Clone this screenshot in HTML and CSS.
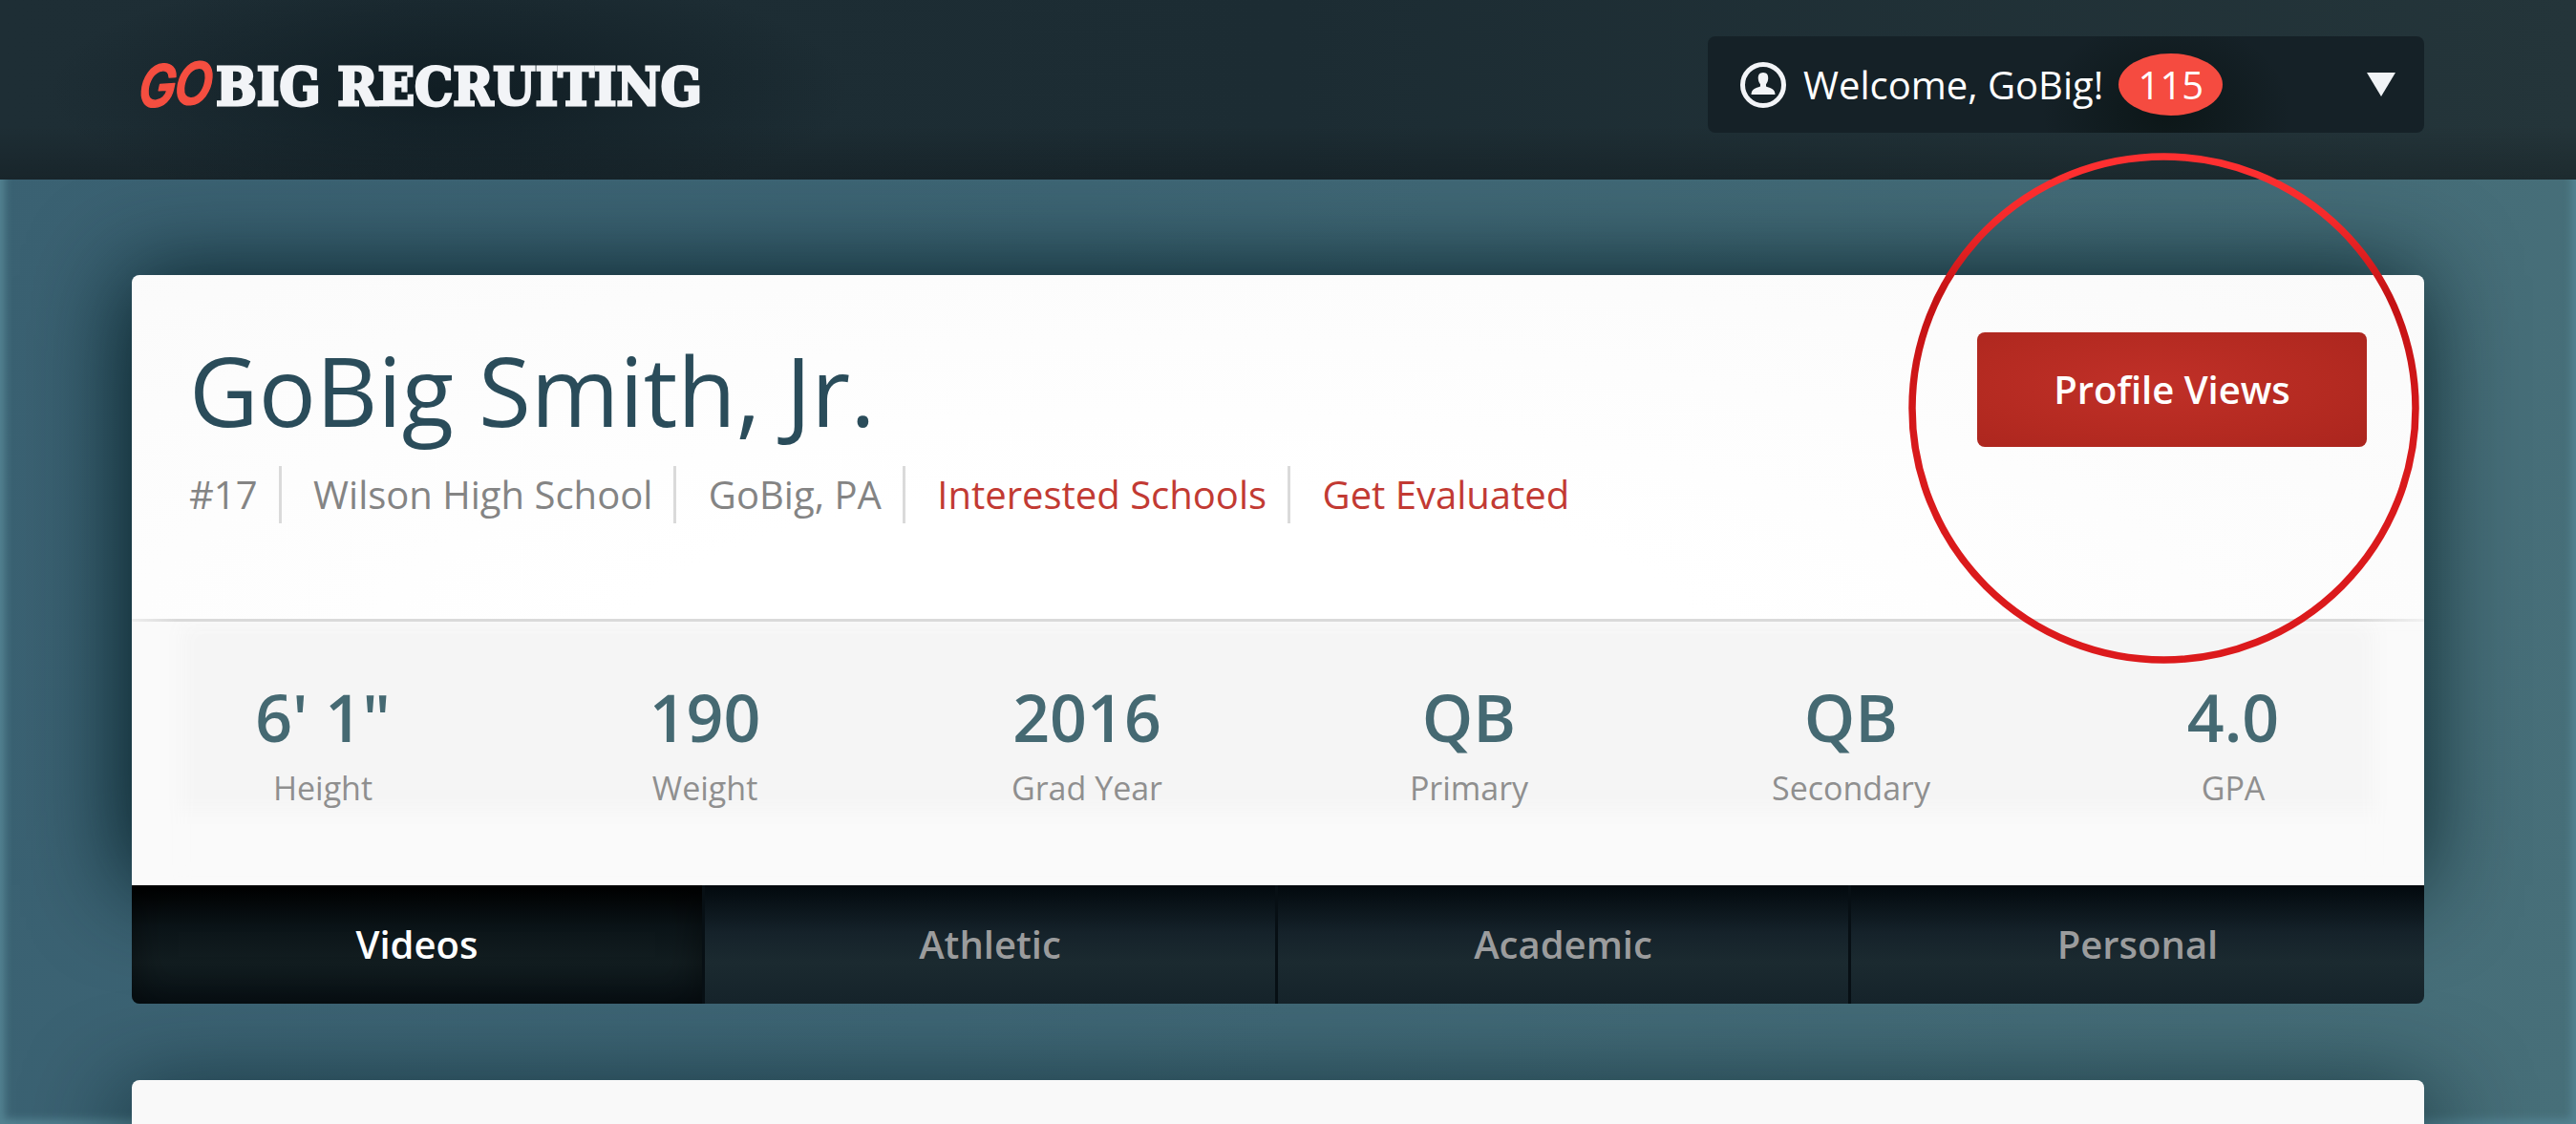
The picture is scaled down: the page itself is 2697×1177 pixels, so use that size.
FILE: index.html
```html
<!DOCTYPE html>
<html lang="en">
<head>
    <meta charset="UTF-8">
    <title>GoBig Recruiting</title>
    <link rel="stylesheet" href="styles.css">
</head>
<body>
    <header class="site-header">
        <svg class="logo" viewBox="0 0 600 80" role="img" aria-label="GoBig Recruiting">
            <text class="logo-go" transform="translate(6 63) rotate(-4) skewX(-8)" textLength="76" lengthAdjust="spacingAndGlyphs">GO</text>
            <text class="logo-name" x="88" y="60" textLength="509" lengthAdjust="spacingAndGlyphs">BIG RECRUITING</text>
        </svg>

        <div class="user-menu">
            <svg class="user-icon" viewBox="0 0 48 48">
                <circle cx="24" cy="24" r="21.500" fill="none" stroke="#f2f4f7" stroke-width="5"/>
                <path d="M24 11c-4 0-5.500 2.800-5.200 6.500.2 2.800 1 4.200 2.200 5.700v2.300c-5 1.700-9.500 3-9.500 8.500h25c0-5.500-4.500-6.800-9.500-8.500v-2.300c1.200-1.500 2-2.900 2.200-5.700.3-3.700-1.200-6.500-5.200-6.500z" fill="#f2f4f7"/>
            </svg>
            <span class="welcome">Welcome, GoBig!</span>
            <span class="badge">115</span>
            <span class="caret"></span>
        </div>
    </header>

    <main class="container">
        <section class="profile">
            <div class="card">
                <div class="card-head">
                    <div>
                        <h1>GoBig Smith, Jr.</h1>
                        <ul class="meta">
                            <li>#17</li>
                            <li>Wilson High School</li>
                            <li>GoBig, PA</li>
                            <li><a href="#">Interested Schools</a></li>
                            <li><a href="#">Get Evaluated</a></li>
                        </ul>
                    </div>
                    <button type="button" class="btn">Profile Views</button>
                </div>

                <div class="stats">
                    <div class="stat"><strong>6' 1"</strong><span>Height</span></div>
                    <div class="stat"><strong>190</strong><span>Weight</span></div>
                    <div class="stat"><strong>2016</strong><span>Grad Year</span></div>
                    <div class="stat"><strong>QB</strong><span>Primary</span></div>
                    <div class="stat"><strong>QB</strong><span>Secondary</span></div>
                    <div class="stat"><strong>4.0</strong><span>GPA</span></div>
                </div>
            </div>

            <nav class="tabs">
                <a href="#" class="tab active">Videos</a>
                <a href="#" class="tab">Athletic</a>
                <a href="#" class="tab">Academic</a>
                <a href="#" class="tab">Personal</a>
            </nav>
        </section>

        <section class="card next-card"></section>
    </main>

    <!-- Highlight ring around the Profile Views button -->
    <svg class="ring" viewBox="0 0 536 536">
        <defs>
            <linearGradient id="ring-red" x1="0" y1="0" x2="0" y2="1">
                <stop offset="0" stop-color="#ff3031"/>
                <stop offset="0.12" stop-color="#f62a2b"/>
                <stop offset="0.28" stop-color="#c41214"/>
                <stop offset="0.6" stop-color="#d91a1c"/>
                <stop offset="1" stop-color="#dc1a1c"/>
            </linearGradient>
        </defs>
        <circle cx="267.500" cy="267.500" r="263.500" fill="none" stroke="url(#ring-red)" stroke-width="7.500"/>
    </svg>
</body>
</html>
```

FILE: styles.css
```css
:root {
    --red: #c23a33;
    --gray: #848484;
    --font: "Open Sans", "Noto Sans", sans-serif;
}

* {
    box-sizing: border-box;
}

body {
    position: relative;
    height: 1177px;
    margin: 0;
    overflow: hidden;
    font-family: var(--font);
    font-size: 40px;
    background: linear-gradient(100deg, #3a6172 0%, #3e6675 40%, #476f79 100%);
    box-shadow: inset 0 0 8px 5px #548392;
}

a {
    color: inherit;
    text-decoration: none;
}

.site-header {
    position: relative;
    z-index: 1;
    display: flex;
    justify-content: space-between;
    align-items: flex-start;
    height: 188px;
    padding: 38px 159px 0 138px;
    background:
        radial-gradient(ellipse 420px 130px at 470px 95px, rgba(12, 24, 30, 0.75), transparent),
        linear-gradient(rgba(0, 0, 0, 0) 70%, rgba(0, 0, 0, 0.2)),
        linear-gradient(90deg, #1e2e35, #1c2c33 50%, #24353a);
}

.logo {
    width: 600px;
    height: 80px;
    margin-top: 12px;
    overflow: visible;
}

.logo-go {
    font: italic 600 60px "Inter", sans-serif;
    letter-spacing: -2px;
    fill: #f54e40;
    stroke: #f54e40;
    stroke-width: 1.5px;
    stroke-linejoin: round;
}

.logo-name {
    font: bold 55px "DejaVu Serif", serif;
    fill: #f2f4f7;
    stroke: #f2f4f7;
    stroke-width: 3px;
}

.user-menu {
    display: flex;
    align-items: center;
    width: 750px;
    height: 101px;
    padding: 0 30px 0 34px;
    border-radius: 8px;
    color: #fff;
    background:
        radial-gradient(ellipse 130px 100px at 480px 80px, rgba(10, 20, 20, 0.8), transparent),
        #152127;
}

.user-icon {
    width: 48px;
    height: 48px;
}

.welcome {
    margin-left: 18px;
}

.badge {
    width: 109px;
    height: 65px;
    margin-left: 16px;
    border-radius: 50%;
    line-height: 66px;
    text-align: center;
    background: #f54b40;
}

.caret {
    margin-left: auto;
    border: 15px solid transparent;
    border-top: 25px solid #f0f3f6;
    border-bottom: 0;
}

.container {
    width: 2400px;
    margin: 100px 0 0 138px;
}

.card {
    border-radius: 8px 8px 0 0;
    background: radial-gradient(ellipse at 45% 60%, #fff 30%, #fafafa 100%);
    box-shadow: -6px 0 100px rgba(0, 25, 32, 0.95);
}

.card-head {
    display: flex;
    justify-content: space-between;
    align-items: flex-start;
    height: 360px;
    padding: 60px 60px 0;
}

h1 {
    margin: -10px 0 0;
    font-size: 100px;
    font-weight: 400;
    line-height: 140px;
    color: #2a4c5a;
}

.meta {
    display: flex;
    margin: 10px 0 0;
    padding: 0;
    list-style: none;
    line-height: 60px;
    color: var(--gray);
}

.meta li + li {
    margin-left: 22px;
    padding-left: 33.5px;
    border-left: 3px solid #dadada;
}

.meta a {
    color: var(--red);
}

.btn {
    width: 408px;
    height: 120px;
    padding: 0 0 2px;
    border: 0;
    border-radius: 8px;
    font: 600 40px var(--font);
    color: #fff;
    background: radial-gradient(ellipse at 45% 45%, #c03028, #b42a21 60%, #ab251e);
}

.stats {
    display: grid;
    grid-template-columns: repeat(6, 1fr);
    height: 279px;
    padding-top: 53px;
    border-top: 3px solid;
    border-image: linear-gradient(90deg, #eee, #dadada 2%, #dadada 97%, #f2f2f2) 1;
    background: #f5f5f5;
    box-shadow: inset 52px 0 20px #fafafa, inset -52px 0 20px #fafafa, inset 0 -77px 20px #fafafa;
}

.stat {
    display: flex;
    flex-direction: column;
    align-items: center;
}

.stat strong {
    font-size: 68px;
    font-weight: 600;
    line-height: 94px;
    color: #456972;
}

.stat span {
    margin-top: 4px;
    font-size: 34px;
    line-height: 46px;
    color: #8f8f8f;
}

.tabs {
    position: relative;
    display: grid;
    grid-template-columns: repeat(4, 1fr);
    height: 124px;
    border-radius: 0 0 8px 8px;
    overflow: hidden;
}

.tab {
    border-right: 3px solid #070f14;
    font-weight: 600;
    line-height: 124px;
    text-align: center;
    color: #9b9c9d;
    background: linear-gradient(#02090d, #15222a 40%, #1b2a30 65%, #15232a);
}

.tab:last-child {
    border-right: 0;
}

.tab.active {
    color: #fff;
    background: linear-gradient(#000, #0b1418 35%, #121d20 65%, #081116);
    box-shadow: inset 0 0 40px rgba(0, 0, 0, 0.5);
}

.next-card {
    height: 46px;
    margin-top: 80px;
    background: #f9f9f9;
    box-shadow: 0 30px 100px 10px rgba(0, 25, 32, 0.9);
}

.ring {
    position: absolute;
    top: 160px;
    left: 1998px;
    z-index: 2;
    width: 536px;
    height: 536px;
}
```
